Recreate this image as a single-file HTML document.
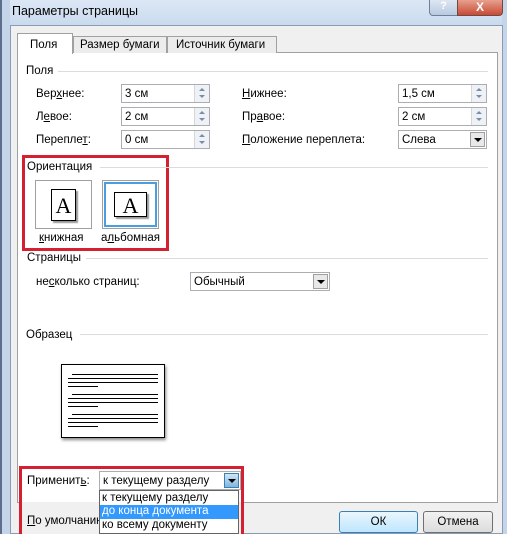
<!DOCTYPE html>
<html><head><meta charset="utf-8"><style>
*{box-sizing:border-box;margin:0;padding:0}
body{width:507px;height:534px;overflow:hidden;position:relative;background:#f0f0f0;font-family:"Liberation Sans","DejaVu Sans",sans-serif;font-size:11.5px;color:#000}
.a{position:absolute}
.t{position:absolute;white-space:nowrap}
.inp{position:absolute;background:#fff;border:1px solid #abadb3;height:19px;padding:3px 0 0 3px}
.spin{position:absolute;right:0;top:0;width:15px;height:17px;border-left:1px solid #d6d6d6;background:#eef1f5}
.spin:before{content:"";position:absolute;left:4px;top:3px;border:3px solid transparent;border-bottom:3px solid #7a8da8;border-top:0}
.spin:after{content:"";position:absolute;left:4px;top:10px;border:3px solid transparent;border-top:3px solid #7a8da8;border-bottom:0}
.dd{position:absolute;right:1px;top:1px;width:15px;height:15px;border:1px solid #a0a0a0;background:#e8e8e8}
.dd:after{content:"";position:absolute;left:3px;top:5px;border:4px solid transparent;border-top:4px solid #000;border-bottom:0}
.line{position:absolute;height:1px;background:#dcdcdc}
u{text-decoration:underline}
.sl{position:absolute;height:2px;background:#000}
</style></head><body>
<div class="a" style="left:0;top:0;width:507px;height:26px;background:linear-gradient(#dce7f5,#c9daee)"></div>
<div class="a" style="left:0;top:0;width:10px;height:534px;background:#c4d5ea;border-left:2px solid #5b6f8c"></div>
<div class="a" style="left:502px;top:0;width:5px;height:534px;background:#c4d5ea"></div>
<div class="t" style="left:12px;top:4px;font-size:12.5px">Параметры страницы</div>
<div class="a" style="left:429px;top:0;width:29px;height:16px;background:linear-gradient(#dde6f2,#b9c9df);border:1px solid #6f7f96;border-top:0;border-radius:0 0 0 4px;text-align:center;color:#fff;font-size:11px;font-weight:bold">?</div>
<div class="a" style="left:457px;top:0;width:46px;height:16px;background:linear-gradient(#e8a08f,#c84a34);border:1px solid #6f4a40;border-top:0;border-radius:0 0 4px 0;text-align:center;color:#fff;font-size:12px;font-weight:bold">X</div>
<div class="a" style="left:10px;top:25px;width:493px;height:509px;background:#f0f0f0;border:1px solid #8a9bb3"></div>
<div class="a" style="left:17px;top:52px;width:481px;height:451px;background:#fff;border:1px solid #a0a0a0"></div>
<div class="a" style="left:17px;top:33px;width:56px;height:21px;background:#fff;border:1px solid #a0a0a0;border-bottom:0"></div>
<div class="t" style="left:30px;top:39px">Поля</div>
<div class="a" style="left:73px;top:36px;width:94px;height:17px;background:#ececec;border:1px solid #a0a0a0;border-bottom:0"></div>
<div class="t" style="left:80px;top:39px">Размер бумаги</div>
<div class="a" style="left:167px;top:36px;width:110px;height:17px;background:#ececec;border:1px solid #a0a0a0;border-bottom:0"></div>
<div class="t" style="left:176px;top:39px">Источник бумаги</div>
<div class="t" style="left:26px;top:65px">Поля</div><div class="line" style="left:58px;top:71px;width:430px"></div>
<div class="t" style="left:36px;top:88px">Вер<u>х</u>нее:</div>
<div class="t" style="left:36px;top:111px">Л<u>е</u>вое:</div>
<div class="t" style="left:36px;top:134px">Перепле<u>т</u>:</div>
<div class="inp" style="left:121px;top:84px;width:89px">3 см<span class="spin"></span></div>
<div class="inp" style="left:121px;top:107px;width:89px">2 см<span class="spin"></span></div>
<div class="inp" style="left:121px;top:130px;width:89px">0 см<span class="spin"></span></div>
<div class="t" style="left:242px;top:88px"><u>Н</u>ижнее:</div>
<div class="t" style="left:242px;top:111px">Пр<u>а</u>вое:</div>
<div class="t" style="left:242px;top:134px"><u>П</u>оложение переплета:</div>
<div class="inp" style="left:398px;top:84px;width:89px">1,5 см<span class="spin"></span></div>
<div class="inp" style="left:398px;top:107px;width:89px">2 см<span class="spin"></span></div>
<div class="inp" style="left:398px;top:130px;width:89px">Слева<span class="dd"></span></div>
<div class="a" style="left:22px;top:155px;width:147px;height:96px;border:3px solid #d42030"></div>
<div class="t" style="left:27px;top:161px">Ориентация</div><div class="line" style="left:100px;top:167px;width:388px"></div>
<div class="a" style="left:35px;top:180px;width:57px;height:49px;border:1px solid #a0a0a0;background:#fff"></div>
<div class="a" style="left:51px;top:189px;width:25px;height:32px;border:1px solid #000;background:#fff;box-shadow:2px 2px 1px #999;font-family:'Liberation Serif',serif;font-size:22px;text-align:center;line-height:31px">A</div>
<div class="a" style="left:102px;top:180px;width:57px;height:49px;border:1px solid #a0a0a0;background:#fff"><div class="a" style="left:1px;top:1px;width:53px;height:45px;border:2px solid #4a9ee0"></div></div>
<div class="a" style="left:114px;top:192px;width:33px;height:25px;border:1px solid #000;background:#fff;box-shadow:2px 2px 1px #999;font-family:'Liberation Serif',serif;font-size:22px;text-align:center;line-height:25px">A</div>
<div class="t" style="left:39px;top:232px"><u>к</u>нижная</div>
<div class="t" style="left:101px;top:232px">а<u>л</u>ьбомная</div>
<div class="t" style="left:27px;top:252px">Страницы</div><div class="line" style="left:86px;top:258px;width:402px"></div>
<div class="t" style="left:36px;top:276px">не<u>с</u>колько страниц:</div>
<div class="inp" style="left:190px;top:272px;width:140px">Обычный<span class="dd"></span></div>
<div class="t" style="left:26px;top:329px">Образец</div><div class="line" style="left:80px;top:334px;width:408px"></div>
<div class="a" style="left:61px;top:364px;width:104px;height:74px;border:1px solid #000;background:#fff;box-shadow:1px 2px 3px #888"></div>
<div class="sl" style="left:72px;top:374px;width:86px;height:1px"></div><div class="sl" style="left:68px;top:378px;width:90px;height:1px"></div><div class="sl" style="left:68px;top:382px;width:90px;height:1px"></div><div class="sl" style="left:68px;top:386px;width:30px;height:1px"></div>
<div class="sl" style="left:72px;top:394px;width:86px;height:1px"></div><div class="sl" style="left:68px;top:398px;width:90px;height:1px"></div><div class="sl" style="left:68px;top:402px;width:90px;height:1px"></div><div class="sl" style="left:68px;top:406px;width:30px;height:1px"></div>
<div class="sl" style="left:72px;top:414px;width:86px;height:1px"></div><div class="sl" style="left:68px;top:418px;width:90px;height:1px"></div><div class="sl" style="left:68px;top:422px;width:90px;height:1px"></div><div class="sl" style="left:68px;top:426px;width:30px;height:1px"></div>
<div class="a" style="left:339px;top:511px;width:79px;height:22px;border:1px solid #3c7fb1;border-radius:3px;background:linear-gradient(#eaf6fd,#bee6fd);text-align:center;padding-top:4px">ОК</div>
<div class="a" style="left:423px;top:511px;width:70px;height:22px;border:1px solid #707070;border-radius:3px;background:linear-gradient(#f2f2f2,#dcdcdc);text-align:center;padding-top:4px">Отмена</div>
<div class="a" style="left:19px;top:466px;width:225px;height:68px;border:3px solid #d42030;background:#fff"></div>
<div class="a" style="left:22px;top:502px;width:219px;height:32px;background:#f0f0f0"></div>
<div class="t" style="left:27px;top:515px"><u>П</u>о умолчанию</div>
<div class="t" style="left:27px;top:475px">Применит<u>ь</u>:</div>
<div class="inp" style="left:99px;top:471px;width:142px">к текущему разделу<span class="dd" style="background:linear-gradient(#cfe6f7,#7fb6e0);border-color:#3c7fb1"></span></div>
<div class="a" style="left:99px;top:490px;width:140px;height:44px;background:#fff;border:1px solid #646464"></div>
<div class="t" style="left:102px;top:492px">к текущему разделу</div>
<div class="a" style="left:100px;top:505px;width:138px;height:14px;background:#3399ff"></div>
<div class="t" style="left:102px;top:505px;color:#fff">до конца документа</div>
<div class="t" style="left:102px;top:519px">ко всему документу</div>
</body></html>
